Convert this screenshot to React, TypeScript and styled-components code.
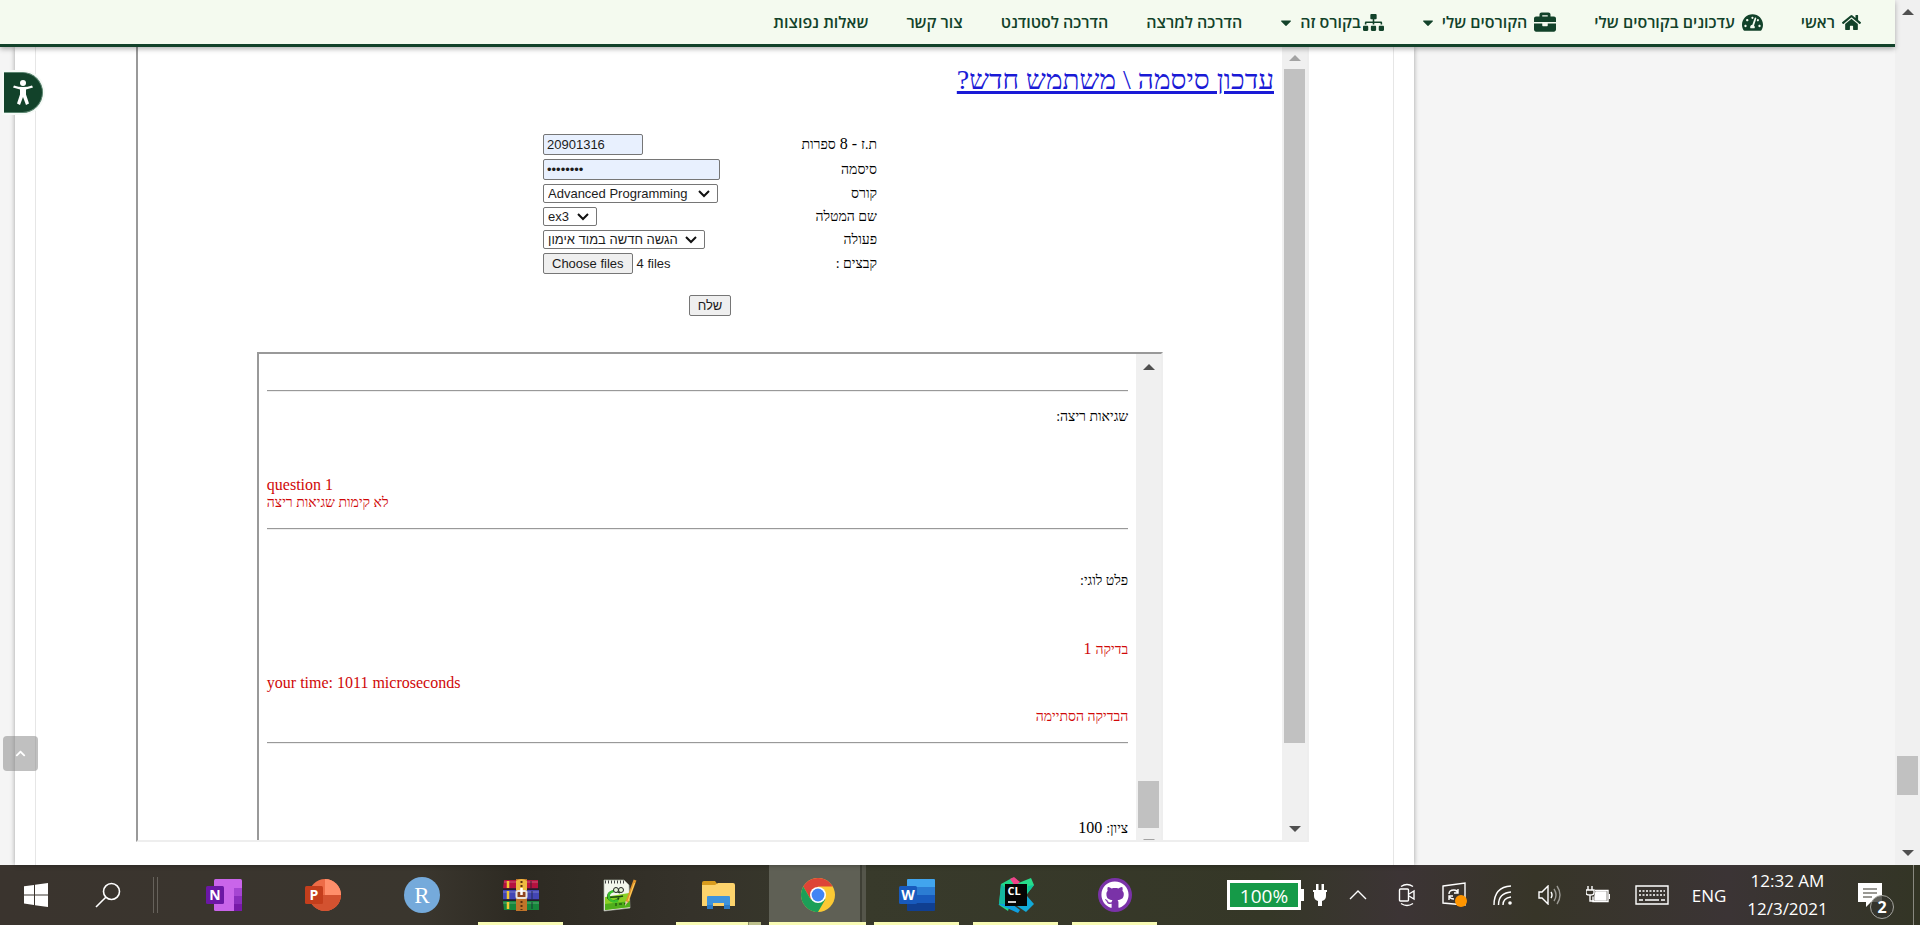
import React, { useRef } from "react";
import type { ReactNode } from "react";
import styled, { createGlobalStyle, css } from "styled-components";
import { FaBriefcase, FaHome, FaSitemap, FaTachometerAlt, FaCaretDown, FaGithub, FaChevronUp } from "react-icons/fa";

const GlobalStyle = createGlobalStyle`
  *, *::before, *::after { box-sizing: border-box; }
  body { margin: 0; background: #f5f5f5; font-family: "Liberation Serif", serif; }
`;

const ui = `"Open Sans", "Noto Sans", sans-serif`;
const arial = `"Liberation Sans", Arial, sans-serif`;
const green = "#12422a";

const Desktop = styled.div`
  display: flex;
  flex-direction: column;
  height: 100vh;
  overflow: hidden;
`;

const BrowserView = styled.div`
  display: flex;
  flex: 1;
  min-height: 0;
`;

const Site = styled.div`
  position: relative;
  display: flex;
  flex-direction: column;
  flex: 1;
  min-width: 0;
  background: #f5f5f5;
`;

const NavBar = styled.nav`
  position: relative;
  z-index: 2;
  display: flex;
  flex-shrink: 0;
  align-items: center;
  gap: 38px;
  height: 47px;
  padding-right: 34px;
  direction: rtl;
  background: #f4faef;
  border-bottom: 3px solid ${green};
  box-shadow: 0 2px 5px rgba(0, 0, 0, 0.3);
`;

const NavLink = styled.a<{ $tight?: boolean }>`
  display: flex;
  align-items: center;
  gap: ${(p) => (p.$tight ? 2 : 7)}px;
  color: ${green};
  font: 600 16px/24px ${ui};
  text-decoration: none;
  white-space: nowrap;
`;

const Caret = styled(FaCaretDown)`
  width: 12px;
  height: 17px;
  margin-right: ${(p) => (p.className?.includes("tight") ? 6 : 1)}px;
`;

const PageBody = styled.main`
  display: flex;
  flex: 1;
  min-height: 0;
  padding: 0 20px 0 15px;
`;

const Sheet = styled.div`
  display: flex;
  flex: 1;
  max-width: 1399px;
  padding: 0 20px;
  background: #fff;
  box-shadow: 0 0 5px rgba(0, 0, 0, 0.35);
`;

const Column = styled.div`
  display: flex;
  flex: 1;
  min-width: 0;
  padding: 0 84px 23px 100px;
  border: solid #e6e6e6;
  border-width: 0 1px;
`;

const Frame = styled.section`
  display: flex;
  flex: 1;
  min-width: 0;
  border: solid;
  border-width: 0 2px 2px;
  border-color: #999 #eee #eee #999;
`;

const FrameContent = styled.div`
  display: flex;
  flex-direction: column;
  align-items: center;
  flex: 1;
  min-width: 0;
  padding: 12px 8px 0;
  overflow: hidden;
`;

const TitleLink = styled.a`
  align-self: flex-end;
  direction: rtl;
  font-size: 28px;
  line-height: 42px;
  color: #1a1ad6;
  text-decoration: underline;
  text-decoration-thickness: 3px;
`;

const Form = styled.form`
  display: flex;
  flex-direction: column;
  align-items: center;
  gap: 19px;
  margin-top: 31px;
`;

const Fields = styled.div`
  width: 334px;
`;

const Row = styled.div<{ $tall?: boolean }>`
  display: flex;
  align-items: center;
  justify-content: space-between;
  height: ${(p) => (p.$tall ? 25 : 23)}px;
`;

const Caption = styled.label`
  direction: rtl;
  font-size: 14px;
  line-height: 18px;
`;

const Latin = styled.span`
  font-size: 16px;
`;

const control = css`
  margin: 0;
  font: 13px/17px ${arial};
  color: #1c1c1c;
  border: 1px solid #767676;
  border-radius: 2px;
`;

const TextBox = styled.input<{ $wide?: boolean }>`
  ${control}
  width: ${(p) => (p.$wide ? 177 : 100)}px;
  height: 21px;
  padding: 0 4px 0 3px;
  background: #e8f0fe;
`;

const PickerBox = styled.span<{ $width: number }>`
  position: relative;
  display: flex;
  width: ${(p) => p.$width}px;
  height: 19px;
`;

const PickerField = styled.select`
  ${control}
  flex: 1;
  min-width: 0;
  padding: 0 0 0 4px;
  appearance: none;
  background: #fff;
`;

const PickerArrow = styled.svg`
  position: absolute;
  top: 6px;
  right: 8px;
  pointer-events: none;
`;

const PushButton = styled.button`
  ${control}
  height: 21px;
  padding: 0 8px;
  background: #efefef;
`;

const FilePicker = styled.div`
  display: flex;
  align-items: center;
  gap: 4px;
  font: 13px/17px ${arial};
  color: #1c1c1c;
`;

const Output = styled.section`
  display: flex;
  flex-shrink: 0;
  box-sizing: content-box;
  width: 80%;
  height: 500px;
  margin-top: 36px;
  border: 2px solid;
  border-color: #999 #eee #eee #999;
`;

const Report = styled.div`
  flex: 1;
  min-width: 0;
  padding: 36px 8px 0;
  font-size: 14px;
  line-height: 18px;
`;

const Rule = styled.hr`
  height: 2px;
  margin: 0;
  border: solid;
  border-width: 1px 0;
  border-color: #999 transparent #eee;
`;

const Line = styled.p<{ $gap?: number; $red?: boolean; $ltr?: boolean }>`
  height: 18px;
  margin: ${(p) => p.$gap ?? 16}px 0 0;
  color: ${(p) => (p.$red ? "#d00808" : "#000")};
  direction: ${(p) => (p.$ltr ? "ltr" : "rtl")};
  & + hr { margin-top: 16px; }
`;

const Track = styled.div`
  display: flex;
  flex-direction: column;
  flex-shrink: 0;
  width: 25px;
  background: #f0f0f0;
`;

const TrackEnd = styled.div<{ $down?: boolean; $dim?: boolean; $height?: number }>`
  display: flex;
  flex-shrink: 0;
  align-items: center;
  justify-content: center;
  height: ${(p) => p.$height ?? 22}px;
  &::before {
    content: "";
    border: solid transparent;
    border-width: ${(p) => (p.$down ? "6px 6px 0" : "0 6px 6px")};
    border-${(p) => (p.$down ? "top" : "bottom")}-color: ${(p) => (p.$dim ? "#a3a3a3" : "#505050")};
  }
`;

const Space = styled.div<{ $grow: number }>`
  flex: ${(p) => p.$grow} 1 0;
`;

const Thumb = styled.div<{ $grow: number }>`
  flex: ${(p) => p.$grow} 1 0;
  margin: 0 2px;
  background: #c1c1c1;
`;

type BarProps = { before: number; thumb: number; after: number; dimUp?: boolean; dimDown?: boolean; end?: number };

const ScrollBar = ({ before, thumb, after, dimUp, dimDown, end }: BarProps) => (
  <Track aria-hidden="true">
    <TrackEnd $dim={dimUp} $height={end} />
    <Space $grow={before} />
    <Thumb $grow={thumb} />
    <Space $grow={after} />
    <TrackEnd $down $dim={dimDown} $height={end} />
  </Track>
);

const AccessButton = styled.button`
  position: absolute;
  z-index: 3;
  top: 72px;
  left: 4px;
  display: flex;
  align-items: center;
  justify-content: center;
  width: 39px;
  height: 41px;
  padding: 0;
  background: ${green};
  border: 1px solid #5b8570;
  border-left: 0;
  border-radius: 0 21px 21px 0;
  box-shadow: 0 0 0 2px #f6faf7;
`;

const TopButton = styled.button`
  position: absolute;
  left: 3px;
  bottom: 94px;
  display: flex;
  align-items: center;
  justify-content: center;
  width: 35px;
  height: 35px;
  padding: 0;
  color: #fff;
  background: rgba(130, 130, 130, 0.5);
  border: 0;
  border-radius: 4px;
`;

const TaskBar = styled.footer`
  display: flex;
  flex-shrink: 0;
  justify-content: space-between;
  height: 60px;
  color: #fff;
  font-family: ${ui};
  background: linear-gradient(90deg, #3a342e 0, #3a362e 22%, #2d2a22 27%, #35322a 36%, #383a2b 45%, #353727 66%, #3c3435 73%, #373528 80%, #3b3435 90%, #333525 100%);
`;

const TaskGroup = styled.div`
  display: flex;
`;

const SystemButton = styled.button`
  display: flex;
  align-items: center;
  justify-content: center;
  width: 72px;
  padding: 0;
  background: none;
  border: 0;
`;

const Divider = styled.span`
  width: 5px;
  height: 36px;
  margin: 12px 23px 0 9px;
  border: solid #66625b;
  border-width: 0 1px;
`;

const Apps = styled.div`
  display: flex;
  gap: 14px;
`;

const AppButton = styled.button<{ $open?: boolean; $active?: boolean; $stacked?: boolean }>`
  display: flex;
  align-items: center;
  justify-content: center;
  width: ${(p) => (p.$active ? 97 : 85)}px;
  margin: ${(p) => (p.$active ? "0 -6px" : "0")};
  padding: 3px 0 0;
  background: ${(p) => (p.$active ? "linear-gradient(90deg, #5f6055 91px, #3e3f35 91px 93px, #55564b 93px)" : "none")};
  border: 0;
  border-bottom: 3px solid ${(p) => (p.$open || p.$active ? "#f8fbb4" : "transparent")};
  ${(p) => p.$stacked && css`border-image: linear-gradient(90deg, #f8fbb4 71px, #8a8d66 71px 72px, #bdc08c 72px) 1;`}
`;

const Tray = styled.div`
  display: flex;
  align-items: center;
`;

const Cell = styled.span<{ $width: number }>`
  display: flex;
  align-items: center;
  justify-content: center;
  width: ${(p) => p.$width}px;
`;

const Battery = styled.span`
  position: relative;
  width: 74px;
  height: 30px;
  border: 3px solid #fff;
  background: #159a48;
  font-size: 19px;
  line-height: 26px;
  text-align: center;
  &::after {
    content: "";
    position: absolute;
    top: 6px;
    right: -6px;
    width: 3px;
    height: 12px;
    background: #fff;
  }
`;

const Language = styled.span`
  width: 72px;
  font-size: 17px;
  text-align: center;
`;

const Clock = styled.time`
  width: 85px;
  font-size: 17px;
  line-height: 28px;
  text-align: center;
  white-space: nowrap;
`;

const Notice = styled.span`
  position: relative;
  display: block;
  width: 36px;
  height: 36px;
  margin: 12px 0 0 28px;
`;

const Count = styled.b`
  position: absolute;
  right: 0;
  bottom: 0;
  width: 24px;
  height: 24px;
  font-size: 16px;
  line-height: 22px;
  text-align: center;
  background: #34342dcc;
  border: 1px solid #a5a59f;
  border-radius: 50%;
`;

const PeekEdge = styled.span`
  align-self: stretch;
  width: 7px;
  margin-left: 19px;
  border-left: 1px solid #88887f;
`;

const Letter = styled.text`
  font-family: ${ui};
  font-weight: 700;
  fill: #fff;
  text-anchor: middle;
`;

const WindowsLogo = () => (
  <svg width="24" height="24" viewBox="0 0 24 24" fill="#fff">
    <path d="M0 3.3 10 2v9.500H0zM11 1.800 24 0v11.500H11zM0 12.500h10V22L0 20.600zM11 12.500h13V24l-13-1.800z" />
  </svg>
);

const SearchIcon = () => (
  <svg width="26" height="26" viewBox="0 0 26 26" fill="none" stroke="#fff" strokeWidth="1.6">
    <circle cx="16.500" cy="9.500" r="8" />
    <path d="M10.800 15.200 1 25" />
  </svg>
);

const OneNote = () => (
  <svg width="36" height="32" viewBox="0 0 36 32">
    <rect x="8" width="28" height="32" rx="1.500" fill="#c965ea" />
    <path d="M28 9h8v8h-8z" fill="#a545d2" />
    <path d="M28 17h8v8h-8z" fill="#8a2dbd" />
    <path d="M28 25h8v7h-8z" fill="#7719a8" />
    <rect y="7" width="18" height="18" rx="1.500" fill="#6b17a5" />
    <Letter x="9" y="21" fontSize="14">N</Letter>
  </svg>
);

const PowerPoint = () => (
  <svg width="36" height="32" viewBox="0 0 36 32">
    <circle cx="20" cy="16" r="16" fill="#ed6c47" />
    <path d="M20 0a16 16 0 0 1 16 16H20z" fill="#ff8f6b" />
    <path d="M4 16h32a16 16 0 0 1-32 0z" fill="#d35230" />
    <rect y="7" width="18" height="18" rx="1.500" fill="#c43e1c" />
    <Letter x="9" y="21" fontSize="14">P</Letter>
  </svg>
);

const RStudio = () => (
  <svg width="36" height="36" viewBox="0 0 36 36">
    <circle cx="18" cy="18" r="18" fill="#75aadb" />
    <text x="18" y="26" fontSize="23" fontFamily="Liberation Serif, serif" fill="#fff" textAnchor="middle">R</text>
  </svg>
);

const WinRar = () => (
  <svg width="36" height="32" viewBox="0 0 36 32">
    <path d="M1 1h34v9H0z" fill="#b5123f" />
    <path d="M0 11h36v10H0z" fill="#4346b4" />
    <path d="M0 22h36v9H1z" fill="#16863b" />
    <path d="M1 3h34M0 13h36M0 24h36" stroke="#fff" strokeOpacity=".3" />
    <path d="M0 10h36M0 21h36" stroke="#201b2e" strokeWidth="1.500" />
    <path d="M5 2v7M5 12v8M5 23v7" stroke="#f3c832" strokeWidth="2.500" />
    <path d="M28 2v7M29 12v8M29 23v7" stroke="#182033" strokeWidth="1.500" strokeOpacity=".5" />
    <path d="M13 0h11v32H13z" fill="#c07429" />
    <path d="M13 2q5.500-4 11 0v9H13z" fill="#edb940" />
    <path d="M18.500 2v6M18.500 22v9" stroke="#5a3112" strokeWidth="2" strokeDasharray="2 2" />
    <rect x="13.500" y="12" width="10" height="7" rx="1.500" fill="#8e4420" stroke="#e9e4dc" strokeWidth="2" />
    <path d="M18.500 9v7" stroke="#fff" strokeWidth="2.500" />
  </svg>
);

const NotepadPlus = () => (
  <svg width="34" height="34" viewBox="0 0 34 34">
    <path d="M1 2h20l5 5 1 23-26 3z" fill="#f3f6ec" stroke="#aab0a5" strokeWidth=".7" />
    <path d="M2 19l24-4 1 14-25 3z" fill="#8ad025" />
    <path d="M2 26l25-3v6L2 32z" fill="#4fae1b" />
    <path d="M2 4h19" stroke="#444" strokeWidth="3" strokeDasharray="1 2" />
    <path d="M17 15c-6-4-13-1-12 4s8 5 11 1M4 20c5-2 10 0 16-2" fill="none" stroke="#17450f" strokeWidth="1.500" />
    <path d="M11 13c-5 1-6 4-5 7s6 5 9 2" fill="none" stroke="#3bc22d" strokeWidth="2.500" />
    <circle cx="13" cy="12" r="2.500" fill="#e5f3d5" stroke="#222" />
    <circle cx="18" cy="12" r="2.500" fill="#e5f3d5" stroke="#222" />
    <path d="M13 25v3m3-2h3m2 0 3-1" stroke="#123b0c" fill="none" />
    <path d="M32 2 24 24" stroke="#e0932a" strokeWidth="3" />
    <path d="M31.500 5 25 23" stroke="#ffd261" />
    <path d="m22.500 23-.500 5 3-4z" fill="#e9ccb0" />
  </svg>
);

const Explorer = () => (
  <svg width="33" height="28" viewBox="0 0 33 28">
    <path d="M0 2q0-2 2-2h11l3 4H0z" fill="#d99c1d" />
    <path d="M0 4h13l3-2h15q2 0 2 2v21H0z" fill="#fcd36c" />
    <path d="M6 15h21q1 0 1 1v12h-6v-6H11v6H5V16q0-1 1-1z" fill="#3e93dc" />
    <path d="M5 24h6v4H5zM22 24h6v4h-6z" fill="#2c7ac5" />
  </svg>
);

const Chrome = () => (
  <svg width="34" height="34" viewBox="0 0 34 34">
    <circle cx="17" cy="17" r="17" fill="#fbc934" />
    <path d="M2.300 8.500A17 17 0 0 1 31.700 8.500H17L9.600 21.300z" fill="#dd4437" />
    <path d="M2.300 8.500A17 17 0 0 0 17 34l7.400-12.800H9.600z" fill="#1c9f58" />
    <circle cx="17" cy="17" r="8" fill="#fff" />
    <circle cx="17" cy="17" r="6.400" fill="#4285f4" />
  </svg>
);

const Word = () => (
  <svg width="36" height="32" viewBox="0 0 36 32">
    <path d="M8 1q0-1 1-1h26q1 0 1 1v7H8z" fill="#41a5ee" />
    <path d="M8 8h28v8H8z" fill="#2b7cd3" />
    <path d="M8 16h28v8H8z" fill="#185abd" />
    <path d="M8 24h28v7q0 1-1 1H9q-1 0-1-1z" fill="#103f91" />
    <rect y="7" width="18" height="18" rx="1.500" fill="#185abd" />
    <Letter x="9" y="21" fontSize="14">W</Letter>
  </svg>
);

const CLion = () => (
  <svg width="36" height="36" viewBox="0 0 36 36">
    <path d="M3 7 14 1l5 5-9 28-9-6z" fill="#21d789" />
    <path d="m18 7 15-6 3 7-7 9z" fill="#27dc8b" />
    <path d="m12 2 4-2 6 5-5 4z" fill="#f0438a" />
    <path d="m3 7 7 6-3 15-6-1z" fill="#15b8a0" />
    <path d="M0 27h14l8 6-2 3z" fill="#0e9fe0" />
    <path d="m29 19 7 8-8 8-9-6z" fill="#12a9d8" />
    <path d="m30 9 6-1-7 9z" fill="#0fc59b" />
    <path d="M7 7h22v22H7z" fill="#050505" />
    <Letter x="16" y="18" fontSize="11">CL</Letter>
    <path d="M10 25h8" stroke="#fff" strokeWidth="1.600" />
  </svg>
);

const GitHubBadge = styled.span`
  display: flex;
  align-items: center;
  justify-content: center;
  width: 34px;
  height: 34px;
  color: #fff;
  background: #7a32a8;
  border-radius: 50%;
`;

const Plug = () => (
  <svg width="14" height="22" viewBox="0 0 14 22" fill="#fff">
    <path d="M3 0h2.500v6h3V0H11v6h3v2h-1v4q0 4-4 5v5H5v-5q-4-1-4-5V8H0V6h3z" />
  </svg>
);

const line = { fill: "none", stroke: "#fff", strokeWidth: 1.4 };

const TrayChevron = () => (
  <svg width="18" height="10" viewBox="0 0 18 10" {...line}><path d="m1 9 8-8 8 8" /></svg>
);

const MeetNow = () => (
  <svg width="18" height="24" viewBox="0 0 18 24" {...line}>
    <rect x="1.500" y="6" width="9" height="12" rx="1" />
    <path d="m11 11 5-3v8l-5-3M3 3.500q6-4 12 0M3 20.500q6 4 12 0" />
  </svg>
);

const SyncScreen = () => (
  <svg width="25" height="26" viewBox="0 0 25 26" {...line}>
    <path d="m1 4 22-3v22L1 21z" />
    <path d="M7 12q0-4 5-4 3 0 4 3m0-4v4h-4M12 17q-4 0-5-3m0 4v-4h4" />
    <circle cx="19" cy="19" r="6" fill="#ff9500" stroke="none" />
  </svg>
);

const Wifi = () => (
  <svg width="20" height="22" viewBox="0 0 20 22" {...line}>
    <path d="M1 21Q1 3 18 2M5.500 21q0-12 12.500-13M10 21q0-7 8-8" />
    <circle cx="17" cy="19" r="1.800" fill="#fff" stroke="none" />
  </svg>
);

const Volume = () => (
  <svg width="24" height="20" viewBox="0 0 24 20" {...line}>
    <path d="M1 7h3l6-6v18l-6-6H1zM13 7q2 3 0 6" />
    <path d="M16 4q4 6 0 12M19 1q6 9 0 18" strokeOpacity=".5" />
  </svg>
);

const PowerIcon = () => (
  <svg width="24" height="18" viewBox="0 0 24 18" {...line}>
    <path d="M2 0v4M6 0v4M0 4h8v3q0 2-4 2t-4-2zM4 9v6h4" />
    <path d="M9 4.500h13v11H7v-5" />
    <path d="M10 6h10v8H9v-4z" fill="#fff" />
    <path d="M23.500 8v5" />
  </svg>
);

const Keyboard = () => (
  <svg width="34" height="20" viewBox="0 0 34 20" {...line}>
    <path d="M1 1h32v18H1z" />
    <path d="M4 6h26M4 10h26" strokeDasharray="2 1.500" />
    <path d="M4 15h4M10 15h14M26 15h4" />
  </svg>
);

const NoticeIcon = () => (
  <svg width="24" height="24" viewBox="0 0 24 24">
    <path d="M0 0h24v19H13l-5 5v-5H0z" fill="#fff" />
    <path d="M5 6h14M5 10h14M5 14h9" stroke="#37352b" strokeWidth="1.200" />
  </svg>
);

const Person = () => (
  <svg width="20" height="26" viewBox="0 0 20 26" fill="#fff">
    <circle cx="10" cy="3" r="3" />
    <path d="M1 5.500q9 3 18 0l1 2-7 2v5l3 9-3 1.500-3-8-3 8-3-1.500 3-9v-5l-7-2z" />
  </svg>
);

const Picker = ({ id, width, children }: { id: string; width: number; children: ReactNode }) => (
  <PickerBox $width={width}>
    <PickerField id={id}><option>{children}</option></PickerField>
    <PickerArrow width="12" height="8" viewBox="0 0 12 8" fill="none" stroke="#111" strokeWidth="2">
      <path d="m1 1 5 5 5-5" />
    </PickerArrow>
  </PickerBox>
);

const apps = [
  { name: "OneNote", icon: <OneNote /> },
  { name: "PowerPoint", icon: <PowerPoint /> },
  { name: "RStudio", icon: <RStudio /> },
  { name: "WinRAR", icon: <WinRar />, open: true },
  { name: "Notepad++", icon: <NotepadPlus /> },
  { name: "File Explorer", icon: <Explorer />, open: true, stacked: true },
  { name: "Chrome", icon: <Chrome />, active: true },
  { name: "Word", icon: <Word />, open: true },
  { name: "CLion", icon: <CLion />, open: true },
  { name: "GitHub Desktop", icon: <GitHubBadge><FaGithub size={28} /></GitHubBadge>, open: true },
];

export default function App() {
  const files = useRef<HTMLInputElement>(null);
  return (
    <Desktop>
      <GlobalStyle />
      <BrowserView>
        <Site>
          <NavBar>
            <NavLink href="#home"><FaHome size={19} />ראשי</NavLink>
            <NavLink href="#updates"><FaTachometerAlt size={21} />עדכונים בקורסים שלי</NavLink>
            <NavLink href="#courses"><FaBriefcase size={22} />הקורסים שלי<Caret /></NavLink>
            <NavLink href="#course" $tight><FaSitemap size={21} />בקורס זה<Caret className="tight" /></NavLink>
            <NavLink href="#lecturer">הדרכה למרצה</NavLink>
            <NavLink href="#student">הדרכה לסטודנט</NavLink>
            <NavLink href="#contact">צור קשר</NavLink>
            <NavLink href="#faq">שאלות נפוצות</NavLink>
          </NavBar>
          <PageBody>
            <Sheet>
              <Column>
                <Frame>
                  <FrameContent>
                    <TitleLink href="#password">עדכון סיסמה \ משתמש חדש?</TitleLink>
                    <Form onSubmit={(e) => e.preventDefault()}>
                      <Fields>
                        <Row $tall>
                          <TextBox id="ident" defaultValue="20901316" />
                          <Caption htmlFor="ident">ת.ז<Latin> - 8 </Latin>ספרות</Caption>
                        </Row>
                        <Row $tall>
                          <TextBox id="secret" type="password" autoComplete="off" defaultValue="password" $wide />
                          <Caption htmlFor="secret">סיסמה</Caption>
                        </Row>
                        <Row>
                          <Picker id="course" width={175}>Advanced Programming</Picker>
                          <Caption htmlFor="course">קורס</Caption>
                        </Row>
                        <Row>
                          <Picker id="task" width={54}>ex3</Picker>
                          <Caption htmlFor="task">שם המטלה</Caption>
                        </Row>
                        <Row>
                          <Picker id="action" width={162}>הגשה חדשה במוד אימון</Picker>
                          <Caption htmlFor="action">פעולה</Caption>
                        </Row>
                        <Row $tall>
                          <FilePicker>
                            <PushButton type="button" onClick={() => files.current?.click()}>Choose files</PushButton>
                            <input ref={files} id="files" type="file" multiple hidden />
                            4 files
                          </FilePicker>
                          <Caption htmlFor="files">קבצים :</Caption>
                        </Row>
                      </Fields>
                      <PushButton type="submit">שלח</PushButton>
                    </Form>
                    <Output>
                      <Report>
                        <Rule />
                        <Line>שגיאות ריצה:</Line>
                        <Line $red $ltr $gap={50}><Latin>question 1</Latin></Line>
                        <Line $red $ltr $gap={0}>לא קימות שגיאות ריצה</Line>
                        <Rule />
                        <Line $gap={42}>פלט לוגי:</Line>
                        <Line $red $gap={50}>בדיקה<Latin> 1</Latin></Line>
                        <Line $red $ltr><Latin>your time: 1011 microseconds</Latin></Line>
                        <Line $red>הבדיקה הסתיימה</Line>
                        <Rule />
                        <Line $gap={75}>ציון:<Latin> 100</Latin></Line>
                      </Report>
                      <ScrollBar before={405} thumb={47} after={1} end={25} dimDown />
                    </Output>
                  </FrameContent>
                  <ScrollBar before={0} thumb={673} after={75} dimUp />
                </Frame>
              </Column>
            </Sheet>
          </PageBody>
          <AccessButton aria-label="נגישות"><Person /></AccessButton>
          <TopButton aria-label="למעלה"><FaChevronUp size={11} /></TopButton>
        </Site>
        <ScrollBar before={734} thumb={39} after={46} end={24} />
      </BrowserView>
      <TaskBar>
        <TaskGroup>
          <SystemButton aria-label="Start"><WindowsLogo /></SystemButton>
          <SystemButton aria-label="Search"><SearchIcon /></SystemButton>
          <Divider />
          <Apps>
            {apps.map((a) => (
              <AppButton key={a.name} aria-label={a.name} $open={a.open} $active={a.active} $stacked={a.stacked}>
                {a.icon}
              </AppButton>
            ))}
          </Apps>
        </TaskGroup>
        <Tray>
          <Battery>100%</Battery>
          <Cell $width={37}><Plug /></Cell>
          <Cell $width={40}><TrayChevron /></Cell>
          <Cell $width={57}><MeetNow /></Cell>
          <Cell $width={38}><SyncScreen /></Cell>
          <Cell $width={60}><Wifi /></Cell>
          <Cell $width={33}><Volume /></Cell>
          <Cell $width={64}><PowerIcon /></Cell>
          <Cell $width={43}><Keyboard /></Cell>
          <Language>ENG</Language>
          <Clock>12:32 AM<br />12/3/2021</Clock>
          <Notice><NoticeIcon /><Count>2</Count></Notice>
          <PeekEdge />
        </Tray>
      </TaskBar>
    </Desktop>
  );
}
